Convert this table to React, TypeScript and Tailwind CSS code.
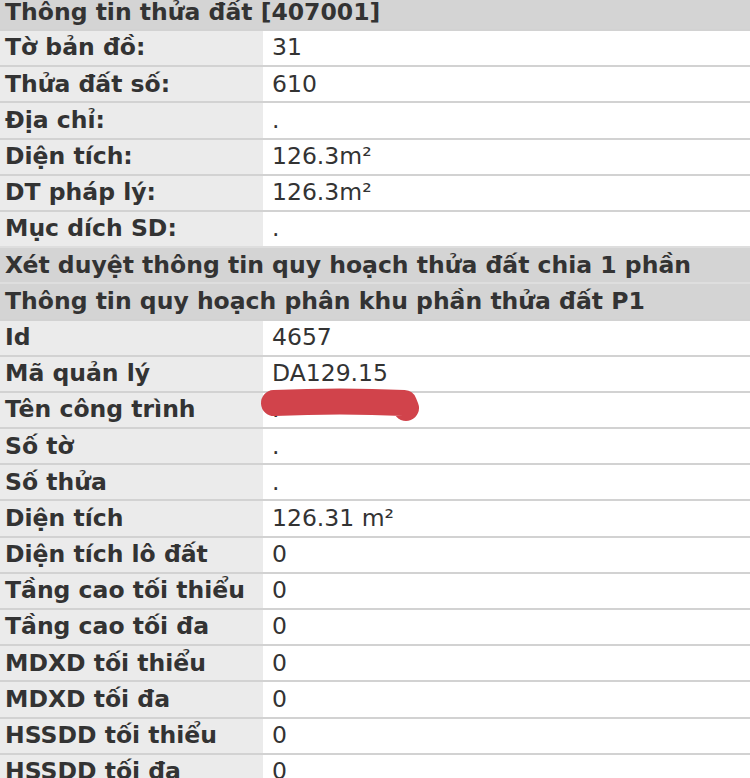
import React from "react";

type Row = { label: string; value?: string; header?: boolean; redacted?: boolean };

const rows: Row[] = [
  { label: "Tờ bản đồ:", value: "31" },
  { label: "Thửa đất số:", value: "610" },
  { label: "Địa chỉ:", value: "." },
  { label: "Diện tích:", value: "126.3m²" },
  { label: "DT pháp lý:", value: "126.3m²" },
  { label: "Mục dích SD:", value: "." },
  { label: "Xét duyệt thông tin quy hoạch thửa đất chia 1 phần", header: true },
  { label: "Thông tin quy hoạch phân khu phần thửa đất P1", header: true },
  { label: "Id", value: "4657" },
  { label: "Mã quản lý", value: "DA129.15" },
  { label: "Tên công trình", value: ".", redacted: true },
  { label: "Số tờ", value: "." },
  { label: "Số thửa", value: "." },
  { label: "Diện tích", value: "126.31 m²" },
  { label: "Diện tích lô đất", value: "0" },
  { label: "Tầng cao tối thiểu", value: "0" },
  { label: "Tầng cao tối đa", value: "0" },
  { label: "MDXD tối thiểu", value: "0" },
  { label: "MDXD tối đa", value: "0" },
  { label: "HSSDD tối thiểu", value: "0" },
  { label: "HSSDD tối đa", value: "0" },
];

// red marker stroke hiding the project name
const Scribble = () => (
  <svg
    className="pointer-events-none absolute left-[-8px] top-[-8px]"
    width="170"
    height="42"
    viewBox="0 0 170 42"
  >
    <path
      d="M19 18 C60 16 110 16 149 18 L151 23"
      fill="none"
      stroke="#d1434b"
      strokeWidth="26"
      strokeLinecap="round"
      strokeLinejoin="round"
    />
  </svg>
);

export default function App() {
  return (
    <div
      className="h-[778px] w-[750px] overflow-hidden bg-white text-[23.5px] text-[#333]"
      style={{ fontFamily: '"DejaVu Sans", Verdana, sans-serif' }}
    >
      <div className="flex h-[29px] items-center bg-[#d4d4d4] pb-[4px] pl-[5px] font-bold">
        Thông tin thửa đất [407001]
      </div>
      {rows.map((r, i) =>
        r.header ? (
          <div
            key={i}
            className="flex h-[36.2px] items-center border-t-2 border-[#dedede] bg-[#d4d4d4] pl-[5px] font-bold whitespace-nowrap"
          >
            {r.label}
          </div>
        ) : (
          <div key={i} className="flex h-[36.2px] border-t-2 border-[#d2d2d2]">
            <div className="flex w-[263px] shrink-0 items-center bg-[#ebebeb] pl-[5px] font-bold whitespace-nowrap">
              {r.label}
            </div>
            <div className="relative flex flex-1 items-center pl-[9px]">
              {r.value}
              {r.redacted && <Scribble />}
            </div>
          </div>
        )
      )}
    </div>
  );
}
